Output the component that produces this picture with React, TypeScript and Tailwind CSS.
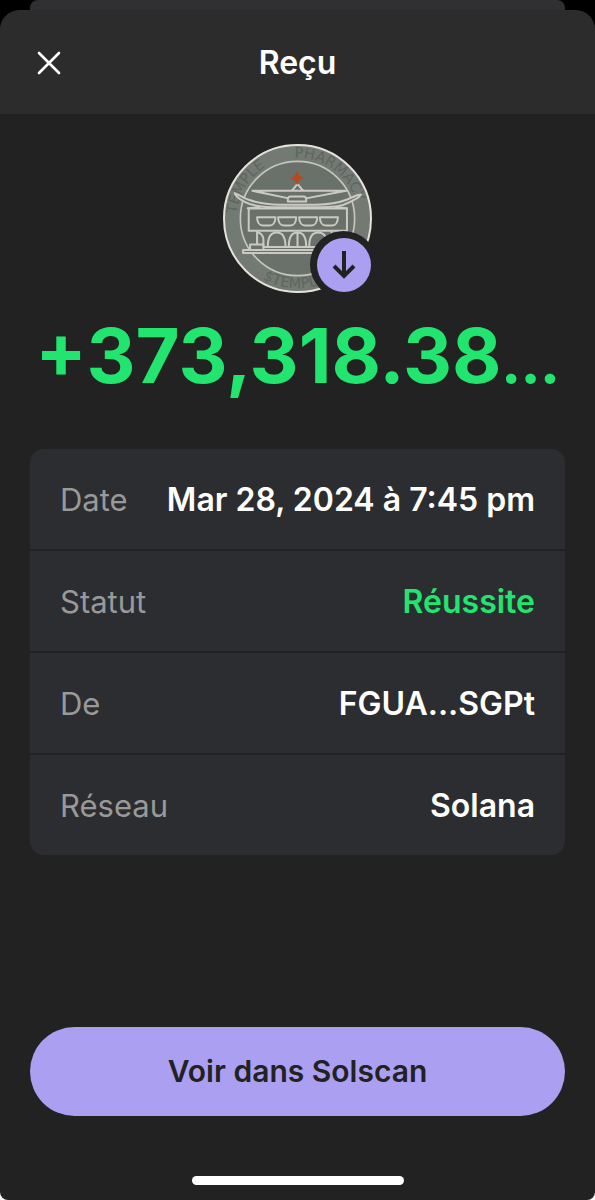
import React from "react";

type Detail = { label: string; value: string; tone?: string };

const details: Detail[] = [
  { label: "Date", value: "Mar 28, 2024 à 7:45 pm" },
  { label: "Statut", value: "Réussite", tone: "text-[#21e56f]" },
  { label: "De", value: "FGUA...SGPt" },
  { label: "Réseau", value: "Solana" },
];

function TokenLogo() {
  return (
    <svg viewBox="24 26 446 446" className="size-full" role="img" aria-label="Temple Pharmacy">
      <defs>
        <path id="ring-top" d="M 71 296 A 182 182 0 1 1 423 296" />
        <path id="ring-bottom" d="M 56 335 A 210 210 0 0 0 438 335" />
      </defs>
      <circle cx="247" cy="249" r="220" fill="#737a73" stroke="#e4e2db" strokeWidth="6" />
      <g fill="#5f665f" fontFamily="DejaVu Sans, sans-serif" fontSize="44" textAnchor="middle">
        <text>
          <textPath href="#ring-top" startOffset="22%">TEMPLE</textPath>
        </text>
        <text>
          <textPath href="#ring-top" startOffset="67%">PHARMACY</textPath>
        </text>
        <text>
          <textPath href="#ring-bottom" startOffset="48%">$TEMPLE</textPath>
        </text>
      </g>
      <circle cx="247" cy="249" r="171" fill="#6a716a" stroke="#c5c5be" strokeWidth="5" />
      <g fill="none" stroke="#cbc9c4" strokeWidth="6" strokeLinejoin="round" strokeLinecap="round">
        <path fill="#6a716a" d="M101 219H395V286H101Z" />
        <path fill="#6a716a" d="M59 173C75 178 84 188 101 193C135 205 160 207 195 208H300C338 207 365 204 396 192C411 187 421 178 437 177C434 187 417 191 403 200C380 213 356 214 325 215H170C135 214 110 211 89 199C79 193 65 188 59 173Z" />
        <path d="M112 166H393L276 188H218ZM228 166C238 161 240 150 247 147C254 150 256 161 266 166" />
        <path fill="#6a716a" d="M218 198V191Q218 183 227 183H265Q273 183 273 191V198Z" />
        <path d="M98 218L133 215M395 218L361 215" />
        <path d="M126 245H181C181 260 174 270 163 270H144C133 270 126 260 126 245ZM189 245H243C243 260 236 270 225 270H207C196 270 189 260 189 245ZM252 245H306C306 260 299 270 288 270H270C259 270 252 260 252 245ZM314 245H368C368 260 361 270 350 270H332C321 270 314 260 314 245Z" />
        <path d="M126 289V324M145 314V333M126 290C137 292 145 300 145 314M158 333C158 305 168 291 185 291C202 291 211 305 211 333M221 333C221 305 229 291 247 291C265 291 273 305 273 333M282 333C282 305 292 291 309 291C326 291 336 305 336 333M247 291V333M349 289V326M367 289V326" />
        <path fill="#6a716a" d="M84 343H410V352H84Z" />
        <path d="M105 343V327H145V343M147 334H350" />
      </g>
      <path d="M246 111L251 122L261 128L251 134L246 145L241 134L230 128L241 122Z" fill="#b54a20" stroke="#b54a20" strokeWidth="4" />
    </svg>
  );
}

export default function App() {
  return (
    <div className="flex min-h-screen flex-col bg-black font-['Inter',sans-serif]">
      <div className="mx-[30px] h-[10px] rounded-tl-[8px] rounded-tr-[8px] bg-[#303033]" />
      <div className="flex grow flex-col bg-[linear-gradient(to_bottom,#000_50%,#fff_50%)]">
        <main className="flex grow flex-col overflow-hidden rounded-t-[20px] rounded-b-[8px] bg-[#222222]">
          <header className="grid h-[104px] grid-cols-[1fr_auto_1fr] items-center bg-[#2c2c2c] px-[30px] pt-[2px]">
            <button type="button" aria-label="Fermer" className="flex size-[38px] items-center justify-center text-white">
              <svg viewBox="0 0 24 24" className="size-6" fill="none" stroke="currentColor" strokeWidth="2.6" strokeLinecap="round">
                <path d="M2 2L22 22M22 2L2 22" />
              </svg>
            </button>
            <h1 className="text-[32px] leading-10 font-semibold text-white">Reçu</h1>
          </header>

          <section className="flex flex-col items-center px-[30px] pt-[30px]">
            <div className="relative size-[149px]">
              <TokenLogo />
              <span className="absolute -right-[5px] -bottom-[5px] flex size-[67px] items-center justify-center rounded-full bg-[#222222]">
                <span className="flex size-[54px] items-center justify-center rounded-full bg-[#ab9ff2]">
                  <svg viewBox="0 0 24 28" className="h-7 w-6" fill="none" stroke="#222222" strokeWidth="4">
                    <path d="M12 0V25M2 15L12 25L22 15" />
                  </svg>
                </span>
              </span>
            </div>
            <p className="mt-4 text-[76px] leading-[92px] font-bold whitespace-nowrap text-[#21e56f]">
              +373,318.38<span className="text-[52px] leading-none font-black">…</span>
            </p>
          </section>

          <dl className="mx-[30px] mt-12 flex flex-col gap-[2px] overflow-hidden rounded-[14px]">
            {details.map(({ label, value, tone = "text-white" }) => (
              <div key={label} className="flex h-[100px] items-center justify-between bg-[#2c2d30] px-[30px] pt-[2px] leading-10">
                <dt className="text-[31px] text-[#999999]">{label}</dt>
                <dd className={`text-[32px] font-semibold ${tone}`}>{value}</dd>
              </div>
            ))}
          </dl>

          <footer className="mt-auto flex flex-col items-center px-[30px] pb-[15px]">
            <button type="button" className="h-[89px] w-full rounded-full bg-[#ab9ff2] text-[30px] font-semibold text-[#222222]">
              Voir dans Solscan
            </button>
            <div className="mt-[60px] h-[9px] w-[212px] rounded-full bg-white" />
          </footer>
        </main>
      </div>
    </div>
  );
}
